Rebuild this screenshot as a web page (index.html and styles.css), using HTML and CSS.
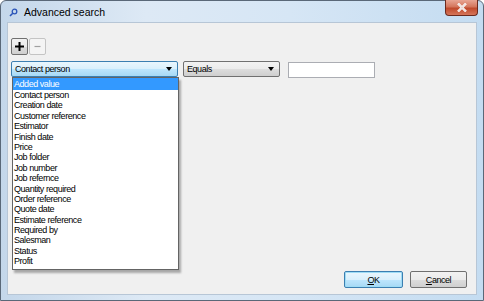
FILE: index.html
```html
<!DOCTYPE html>
<html>
<head>
  <title>Advanced search</title>
  <meta charset="utf-8">
  <link rel="stylesheet" href="styles.css">
</head>
<body>
  <div class="window">
    <!-- Title bar -->
    <div class="titlebar">
      <svg class="title-icon" width="9" height="9" viewBox="0 0 9 9">
        <circle cx="5.5" cy="3.5" r="2.3" fill="none" stroke="#2a54b8" stroke-width="1.3"/>
        <line x1="3.8" y1="5.2" x2="1" y2="8" stroke="#2a54b8" stroke-width="1.6"/>
      </svg>
      <span class="title-text">Advanced search</span>
      <div class="close-btn">
        <svg width="14" height="9" viewBox="0 0 14 9">
          <path d="M3 0.5 L11 8.5 M11 0.5 L3 8.5" stroke="#fff" stroke-width="2.4"/>
          <path d="M3 0.5 L11 8.5 M11 0.5 L3 8.5" stroke="#8b3524" stroke-width="0.6" opacity="0.4"/>
        </svg>
      </div>
    </div>

    <!-- Client area -->
    <div class="client">
      <div class="toolbar">
        <div class="tool-btn">
          <svg width="9" height="9" viewBox="0 0 9 9"><path d="M4.5 0 V9 M0 4.5 H9" stroke="#000" stroke-width="2"/></svg>
        </div>
        <div class="tool-btn disabled">
          <svg width="7" height="7" viewBox="0 0 7 7"><path d="M0.5 3.5 H6.5" stroke="#a0a0a0" stroke-width="1.2"/></svg>
        </div>
      </div>

      <div class="criteria">
        <div class="combo field-combo focused">
          <span class="combo-value">Contact person</span>
          <span class="combo-arrow"></span>
          <ul class="dropdown">
            <li class="selected">Added value</li>
            <li>Contact person</li>
            <li>Creation date</li>
            <li>Customer reference</li>
            <li>Estimator</li>
            <li>Finish date</li>
            <li>Price</li>
            <li>Job folder</li>
            <li>Job number</li>
            <li>Job refernce</li>
            <li>Quantity required</li>
            <li>Order reference</li>
            <li>Quote date</li>
            <li>Estimate reference</li>
            <li>Required by</li>
            <li>Salesman</li>
            <li>Status</li>
            <li>Profit</li>
          </ul>
        </div>
        <div class="combo op-combo">
          <span class="combo-value">Equals</span>
          <span class="combo-arrow"></span>
        </div>
        <div class="textbox"></div>
      </div>

      <div class="actions">
        <button class="btn default"><u>O</u>K</button>
        <button class="btn"><u>C</u>ancel</button>
      </div>
    </div>
  </div>
</body>
</html>
```

FILE: styles.css
```css
body {
  margin: 0;
  width: 484px;
  height: 301px;
  overflow: hidden;
  background: #fff;
  font-family: 'Liberation Sans', Arial, sans-serif;
}

.window {
  box-sizing: border-box;
  width: 484px;
  height: 301px;
  display: flex;
  flex-direction: column;
  border: 1px solid #5a6878;
  border-radius: 6px 6px 0 0;
  background: linear-gradient(90deg, #c4d7ea 0%, #dde9f5 30%, #d6e6f5 60%, #c4dcf1 100%);
}

.titlebar {
  height: 21px;
  display: flex;
  align-items: center;
  padding-left: 8px;
  position: relative;
}

.title-icon {
  margin-right: 6px;
  margin-top: 1px;
}

.title-text {
  font-size: 10.5px;
  color: #000;
  margin-top: 1px;
}

.close-btn {
  position: absolute;
  top: -1px;
  right: 5px;
  width: 33px;
  height: 16px;
  box-sizing: border-box;
  border: 1px solid #6b2a1e;
  border-top: none;
  border-radius: 0 0 4px 4px;
  background: linear-gradient(180deg, #e8a593 0%, #d4765c 45%, #c04a2c 55%, #d5765a 100%);
  display: flex;
  align-items: center;
  justify-content: center;
}

.client {
  flex: 1;
  margin: 0 6px 5px 6px;
  border: 1px solid #b7c6d6;
  background: #f0f0f0;
  display: flex;
  flex-direction: column;
  padding: 15px 9px 6px 3px;
  font-size: 9px;
  letter-spacing: -0.45px;
}

.toolbar {
  display: flex;
  gap: 1px;
}

.tool-btn {
  box-sizing: border-box;
  width: 17px;
  height: 17px;
  border: 1px solid #707070;
  border-radius: 2px;
  background: linear-gradient(180deg, #f2f2f2 0%, #ebebeb 50%, #dddddd 51%, #cfcfcf 100%);
  display: flex;
  align-items: center;
  justify-content: center;
}

.tool-btn.disabled {
  border-color: #c4c4c4;
  background: #f4f4f4;
}

.criteria {
  display: flex;
  align-items: flex-start;
  margin-top: 6px;
}

.combo {
  position: relative;
  box-sizing: border-box;
  height: 16px;
  border: 1px solid #707070;
  border-radius: 2px;
  background: linear-gradient(180deg, #f2f2f2 0%, #ebebeb 50%, #dddddd 51%, #cfcfcf 100%);
  display: flex;
  align-items: center;
  padding-left: 3px;
  color: #000;
}

.combo.focused {
  border-color: #3c7fb1;
  background: linear-gradient(180deg, #eaf6fd 0%, #d9f0fc 50%, #bee6fd 51%, #a7d9f5 100%);
}

.combo-value {
  flex: 1;
}

.combo-arrow {
  width: 0;
  height: 0;
  border-left: 3.5px solid transparent;
  border-right: 3.5px solid transparent;
  border-top: 4px solid #000;
  margin-right: 5px;
}

.field-combo {
  width: 167px;
}

.op-combo {
  width: 97px;
  margin-left: 5px;
}

.textbox {
  box-sizing: border-box;
  width: 87px;
  height: 16px;
  margin-left: 8px;
  margin-top: 1px;
  border: 1px solid #abadb3;
  background: #fff;
}

.dropdown {
  position: absolute;
  top: 15px;
  left: 0;
  width: 167px;
  box-sizing: border-box;
  margin: 0;
  padding: 0 0 2px 0;
  list-style: none;
  background: #fff;
  border: 1px solid #646464;
  box-shadow: 2px 3px 2px rgba(0, 0, 0, 0.3);
  z-index: 2;
}

.dropdown li {
  height: 10.4px;
  line-height: 10.4px;
  padding-left: 1px;
  white-space: nowrap;
  color: #000;
}

.dropdown li.selected {
  height: 12px;
  line-height: 12px;
  background: #3399ff;
  color: #fff;
}

.actions {
  margin-top: auto;
  display: flex;
  justify-content: flex-end;
  gap: 7px;
}

.btn {
  box-sizing: border-box;
  width: 57px;
  height: 17px;
  margin: 0;
  padding: 0;
  border: 1px solid #707070;
  border-radius: 2px;
  background: linear-gradient(180deg, #f2f2f2 0%, #ebebeb 50%, #dddddd 51%, #cfcfcf 100%);
  font-family: inherit;
  letter-spacing: inherit;
  font-size: 9px;
  color: #000;
}

.btn.default {
  width: 59px;
  border-color: #3c7fb1;
  box-shadow: inset 0 0 0 1px #9fdcf5;
  background: linear-gradient(180deg, #eaf6fd 0%, #d9f0fc 50%, #bee6fd 51%, #a7d9f5 100%);
}
```
